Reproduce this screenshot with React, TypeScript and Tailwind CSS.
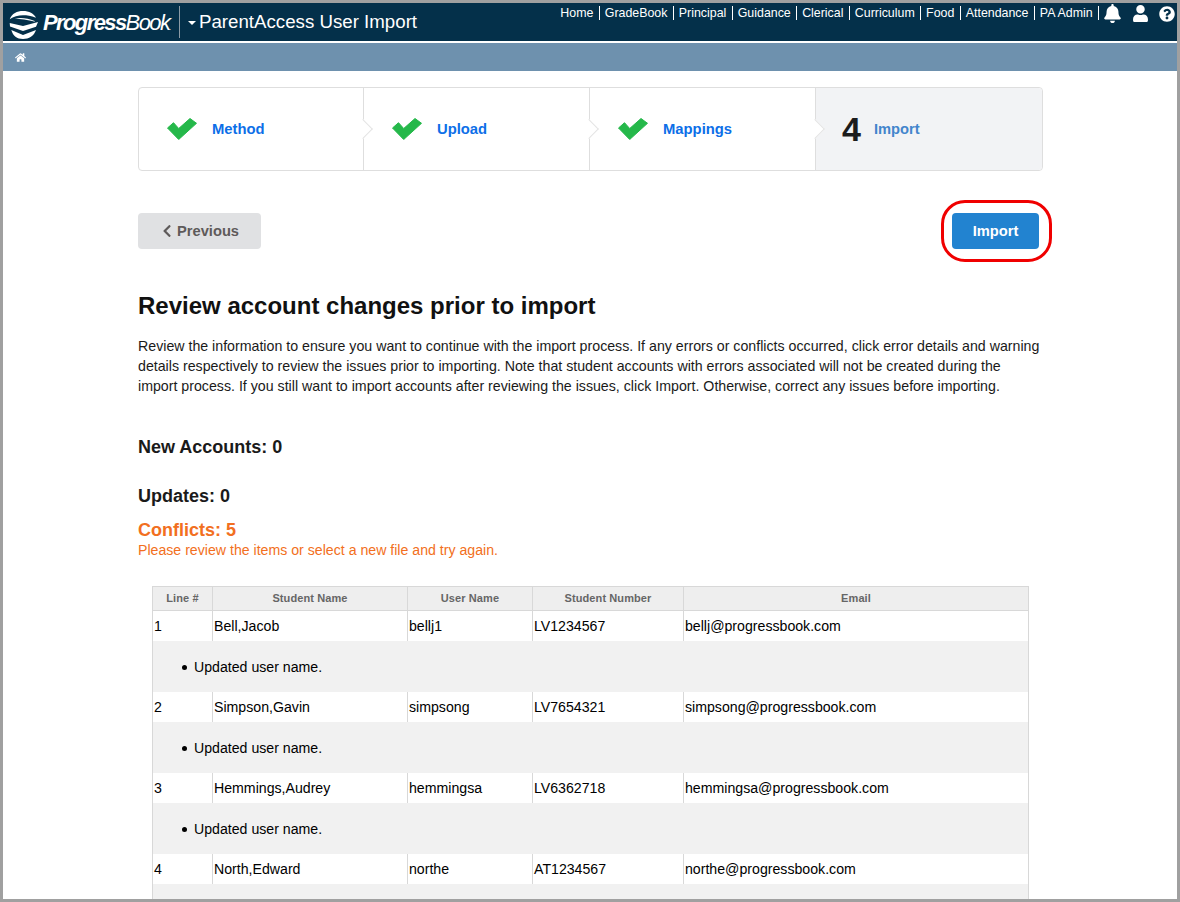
import { FaBell, FaChevronLeft, FaHome, FaQuestionCircle, FaUser } from 'react-icons/fa';

const NAV_LINKS = ['Home', 'GradeBook', 'Principal', 'Guidance', 'Clerical', 'Curriculum', 'Food', 'Attendance', 'PA Admin'];

const STEPS = [
  { label: 'Method', width: 'w-[225px]' },
  { label: 'Upload', width: 'w-[226px]' },
  { label: 'Mappings', width: 'w-[226px]' },
];

const NOTE = 'Updated user name.';

// last row's note sits below the fold in the screenshot
const ROWS = [
  { line: 1, name: 'Bell,Jacob', user: 'bellj1', number: 'LV1234567', email: 'bellj@progressbook.com', note: NOTE },
  { line: 2, name: 'Simpson,Gavin', user: 'simpsong', number: 'LV7654321', email: 'simpsong@progressbook.com', note: NOTE },
  { line: 3, name: 'Hemmings,Audrey', user: 'hemmingsa', number: 'LV6362718', email: 'hemmingsa@progressbook.com', note: NOTE },
  { line: 4, name: 'North,Edward', user: 'northe', number: 'AT1234567', email: 'northe@progressbook.com', note: '' },
];

const HEADERS = [
  { label: 'Line #', width: 'w-[60px]' },
  { label: 'Student Name', width: 'w-[195px]' },
  { label: 'User Name', width: 'w-[125px]' },
  { label: 'Student Number', width: 'w-[151px]' },
  { label: 'Email', width: 'w-[345px]' },
];

const Logo = () => (
  <svg width="30" height="28" viewBox="0 0 30 28" className="mt-[5px] shrink-0">
    <path d="M0.700 8.300 C3 2.500 8 0 14 0 C20 0 25 2.500 27 6.700 C22 4.800 18 4.300 14 4.300 C9 4.300 4.500 5.800 0.700 8.300 Z" fill="#fff" />
    <path d="M5.700 7.700 C11 6.300 19 7 25.700 10 L25.700 10.800 C19 8.500 11 7.800 5.700 7.700 Z" fill="#fff" />
    <path d="M0.700 12 L14 15 L29 11 L27 15.700 L14 20 L1 15.500 Z" fill="#fff" />
    <path d="M2.300 19 L14 24 L27 19 C25 25 20 28 14 28 C8 28 4 25 2.300 19 Z" fill="#fff" />
  </svg>
);

const Check = () => (
  <svg width="30" height="22" viewBox="0 0 30 22" className="ml-[28px] shrink-0">
    <path d="M0.500 10 L6.500 4.700 L11.700 10.500 L23 0.500 L29.500 5.300 L11.700 21.500 Z" fill="#25b84a" stroke="#25b84a" strokeWidth="1" strokeLinejoin="round" />
  </svg>
);

const StepArrow = ({ fill }: { fill: string }) => (
  <span className={`absolute right-[-7px] top-[34px] h-[14px] w-[14px] rotate-45 border-t border-r border-[#e4e4e4] ${fill}`} />
);

const Header = () => (
  <header className="flex h-[38px] bg-[#04304a] text-white">
    <div className="flex h-[38px] items-center pl-[6px]">
      <Logo />
      <span className="ml-[4px] text-[22px] italic tracking-[-1.6px]">
        <span className="font-bold">Progress</span>Book<span className="text-[8px]">.</span>
      </span>
      <span className="ml-[9px] h-[32px] w-px bg-[#8c9ba6]" />
      <span className="ml-[8px] mt-[2px] h-0 w-0 border-x-[4px] border-t-[4px] border-x-transparent border-t-white" />
      <span className="ml-[3px] text-[18.700px]">ParentAccess User Import</span>
    </div>
    <div className="ml-auto flex h-[21px] items-center pr-[2px] text-[12.400px]">
      {NAV_LINKS.map((link) => (
        <span key={link} className="flex items-center">
          <span>{link}</span>
          <span className="mx-[5.200px] h-[14px] w-px bg-white" />
        </span>
      ))}
      <FaBell className="-ml-px text-[19px]" />
      <FaUser className="ml-[10px] text-[17px]" />
      <FaQuestionCircle className="ml-[10px] text-[16px]" />
    </div>
  </header>
);

const Stepper = () => (
  <div className="mt-[16px] flex h-[84px] w-[905px] rounded-[4px] border border-[#dedede]">
    {STEPS.map((step) => (
      <div key={step.label} className={`relative flex items-center border-r border-[#dedede] ${step.width}`}>
        <Check />
        <span className="ml-[15px] text-[14.800px] font-bold text-[#0d6fe8]">{step.label}</span>
        <StepArrow fill="bg-white" />
      </div>
    ))}
    <div className="flex flex-1 items-center rounded-r-[4px] bg-[#f2f3f5]">
      <span className="ml-[26px] text-[34px] font-bold leading-none text-[#1c1c1c]">4</span>
      <span className="ml-[13px] text-[14.700px] font-bold text-[#4285cc]">Import</span>
    </div>
  </div>
);

const Actions = () => (
  <div className="mt-[42px] flex h-[36px] w-[905px] justify-between pr-[4px] text-[14.700px] font-bold">
    <button className="flex w-[123px] items-center gap-[3px] rounded-[4px] bg-[#e0e1e3] pl-[22px] text-[#5e5a5a]">
      <FaChevronLeft className="text-[14px]" />
      Previous
    </button>
    <div className="relative">
      <button className="h-[36px] w-[87px] rounded-[4px] bg-[#2283d0] text-white">Import</button>
      <span className="absolute left-[-11px] top-[-13px] h-[62px] w-[111px] rounded-[24px] border-[3px] border-[#f00000]" />
    </div>
  </div>
);

const Row = ({ line, name, user, number, email, note }: (typeof ROWS)[number]) => (
  <>
    <tr className="h-[30px]">
      {[line, name, user, number, email].map((value) => (
        <td key={value} className="border-x border-[#d8d8d8] pb-0 pl-[1px] pr-0 pt-[2px]">
          {value}
        </td>
      ))}
    </tr>
    <tr className="h-[51px] bg-[#f1f1f1]">
      <td colSpan={5} className="p-0 pl-[29px] pt-[4px]">
        {note && (
          <span className="flex items-center gap-[7px]">
            <span className="h-[5px] w-[5px] rounded-full bg-black" />
            {note}
          </span>
        )}
      </td>
    </tr>
  </>
);

const ConflictsTable = () => (
  <table className="ml-[14px] mt-[27px] w-[876px] table-fixed border-collapse border-x border-[#d8d8d8] text-[14.150px] text-black">
    <thead>
      <tr className="h-[24px] bg-[#eeeeee] text-[11px] tracking-[0.1px] text-[#666666]">
        {HEADERS.map((h) => (
          <th key={h.label} className={`border border-[#d8d8d8] p-0 font-bold ${h.width}`}>
            {h.label}
          </th>
        ))}
      </tr>
    </thead>
    <tbody>
      {ROWS.map((row) => (
        <Row key={row.line} {...row} />
      ))}
    </tbody>
  </table>
);

export default function App() {
  return (
    <div className="h-[902px] w-[1180px] overflow-hidden border-[3px] border-[#a0a0a0] bg-white font-['Liberation_Sans',Arial,sans-serif] text-[#1a1a1a]">
      <Header />
      <div className="mt-[2px] flex h-[28px] items-center bg-[#6e91ae] pl-[12px] text-white">
        <FaHome className="text-[11px]" />
      </div>
      <main className="ml-[135px] w-[905px]">
        <Stepper />
        <Actions />
        <h1 className="mt-[42px] text-[24px] font-bold leading-[30px] text-[#111111]">Review account changes prior to import</h1>
        <p className="mt-[15px] text-[14.200px] leading-[20px] text-[#1a1a1a]">
          Review the information to ensure you want to continue with the import process. If any errors or conflicts occurred, click error details and warning
          details respectively to review the issues prior to importing. Note that student accounts with errors associated will not be created during the
          import process. If you still want to import accounts after reviewing the issues, click Import. Otherwise, correct any issues before importing.
        </p>
        <h2 className="mt-[40px] text-[18px] font-bold leading-[22px]">New Accounts: 0</h2>
        <h2 className="mt-[27px] text-[18px] font-bold leading-[22px]">Updates: 0</h2>
        <h2 className="mt-[12px] text-[18px] font-bold leading-[22px] text-[#f26f21]">Conflicts: 5</h2>
        <p className="text-[14.150px] leading-[18px] text-[#f26f21]">Please review the items or select a new file and try again.</p>
        <ConflictsTable />
      </main>
    </div>
  );
}
